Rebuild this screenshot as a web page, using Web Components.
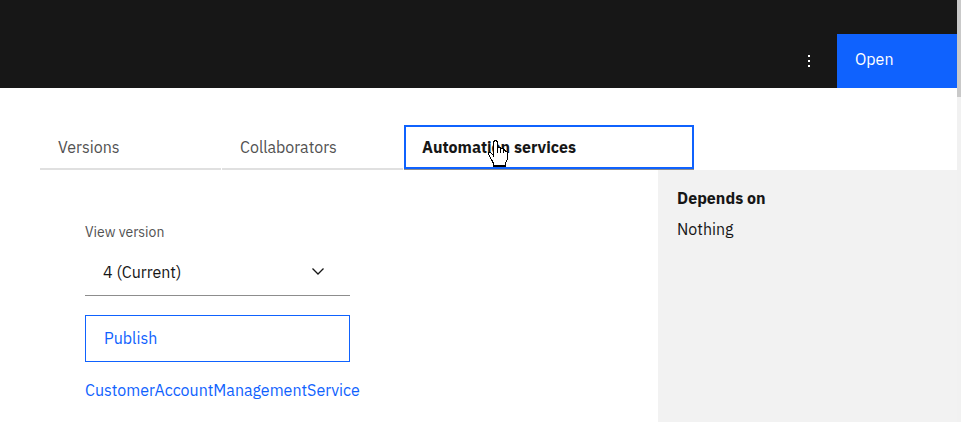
<!DOCTYPE html>
<html lang="en">
<head>
<meta charset="utf-8">
<title>Automation services</title>
<style>
html, body { margin: 0; height: 100%; }
body { font: 16px/20px "IBM Plex Sans", Roboto, "Liberation Sans", sans-serif; color: #161616; background: #fff; overflow: hidden; }
</style>
</head>
<body>
<app-shell>
  <app-header slot="header"></app-header>
  <tab-bar slot="tabs">
    <tab-item>Versions</tab-item>
    <tab-item>Collaborators</tab-item>
    <tab-item selected>Automation services</tab-item>
  </tab-bar>
  <version-form></version-form>
  <info-panel slot="aside" heading="Depends on">Nothing</info-panel>
</app-shell>
<script>
const define = (name, html, setup) => customElements.define(name, class extends HTMLElement {
  constructor() {
    super();
    const t = document.createElement('template');
    t.innerHTML = '<style>:host,*{box-sizing:border-box}button,select{font:inherit;border-radius:0;margin:0;cursor:pointer}</style>' + html;
    this.attachShadow({ mode: 'open' }).append(t.content.cloneNode(true));
  }
  connectedCallback() { if (setup) setup(this, this.shadowRoot); }
});

define('app-shell', `
<style>
:host { display: flex; height: 100%; }
.page { flex: 1; min-width: 0; display: flex; flex-direction: column; }
.body { flex: 1; display: flex; }
main { flex: 1; min-width: 0; padding: 52px 85px 0; }
</style>
<div class="page">
  <slot name="header"></slot>
  <slot name="tabs"></slot>
  <div class="body"><main><slot></slot></main><slot name="aside"></slot></div>
</div>
<scroll-rail></scroll-rail>`);

define('scroll-rail', `
<style>
:host { display: block; flex: 0 0 4px; background: #f1f1f1; }
.thumb { height: 23%; background: #c9c9c9; }
</style>
<div class="thumb"></div>`);

define('app-header', `
<style>
:host { display: flex; justify-content: flex-end; align-items: flex-end; height: 88px; background: #171717; color: #fff; }
button { border: 0; height: 54px; color: inherit; }
.more { width: 56px; background: none; padding: 0; display: grid; place-items: center; }
.open { width: 120px; background: #0f62fe; text-align: left; padding: 0 18px 4px; }
svg { display: block; }
</style>
<button class="more" aria-label="More actions"><svg width="16" height="16" viewBox="0 0 16 16" fill="#fff"><path d="M7 2h2v2H7zM7 7h2v2H7zM7 12h2v2H7z"/></svg></button>
<button class="open">Open</button>`);

define('tab-bar', `
<style>
:host { display: block; padding: 37px 40px 0; }
div { display: flex; gap: 1px; }
</style>
<div role="tablist"><slot></slot></div>`);

define('tab-item', `
<style>
:host { display: block; flex: 0 0 181px; position: relative; }
:host([selected]) { flex-basis: 290px; }
button { display: block; width: 100%; height: 45px; border: 0; border-bottom: 2px solid #e0e0e0; background: #fff; color: #525252; text-align: left; padding: 0 18px; }
:host([selected]) button { border: 0; border-bottom: 1px solid #8d8d8d; box-shadow: inset 0 0 0 2px #0f62fe; color: #161616; font-weight: 700; }
.hand { position: absolute; left: 84px; top: 15px; display: none; pointer-events: none; }
:host([selected]) .hand { display: block; }
</style>
<button role="tab"><slot></slot></button>
<svg class="hand" width="21" height="28" viewBox="0 0 21 28" aria-hidden="true">
  <path d="M5.500 16.500V2.500L6.500 .5H8.500L9.500 2.500V7.500L12.500 7.500 13.500 8.500 15.500 8.500 16.500 10.500 18.500 11.500 19.500 12.500V18.500L17.500 23.500V26.500H5.500V23.500L3.500 19.500 .5 14.500V12.500H2.500L5.500 15.500Z" fill="#fff" stroke="#000" shape-rendering="crispEdges"/>
  <path d="M9.500 6v7M12.500 8v5M15.500 9v4M5.500 25.500h12M5.500 26.500h12" fill="none" stroke="#000" shape-rendering="crispEdges"/>
</svg>`, (el, root) => root.querySelector('button').setAttribute('aria-selected', el.hasAttribute('selected')));

define('version-form', `
<style>
:host { display: flex; flex-direction: column; align-items: flex-start; }
label { font-size: 14px; color: #525252; }
.field { display: grid; width: 265px; margin: 8px 0 19px; }
.field > * { grid-area: 1 / 1; }
select { appearance: none; width: 100%; height: 46px; border: 0; border-bottom: 1px solid #8d8d8d; background: #fff; color: #161616; padding: 0 48px 2px 18px; }
svg { align-self: center; justify-self: end; margin: 0 24px 4px; pointer-events: none; }
button { width: 265px; height: 47px; border: 1px solid #0f62fe; background: #fff; color: #0f62fe; text-align: left; padding: 0 18px 2px; }
a { margin-top: 18px; color: #0f62fe; text-decoration: none; }
</style>
<label for="version">View version</label>
<div class="field">
  <select id="version"><option>4 (Current)</option></select>
  <svg width="16" height="16" viewBox="0 0 16 16"><path d="M2.500 5.500 8 11l5.500-5.500" fill="none" stroke="#161616" stroke-width="1.300"/></svg>
</div>
<button>Publish</button>
<a href="#service">CustomerAccountManagementService</a>`);

define('info-panel', `
<style>
:host { display: block; flex: 0 0 299px; background: #f2f2f2; padding: 18px 19px; }
h2 { font: inherit; font-weight: 700; margin: 0 0 11px; }
</style>
<h2></h2><slot></slot>`, (el, root) => root.querySelector('h2').textContent = el.getAttribute('heading'));
</script>
</body>
</html>
